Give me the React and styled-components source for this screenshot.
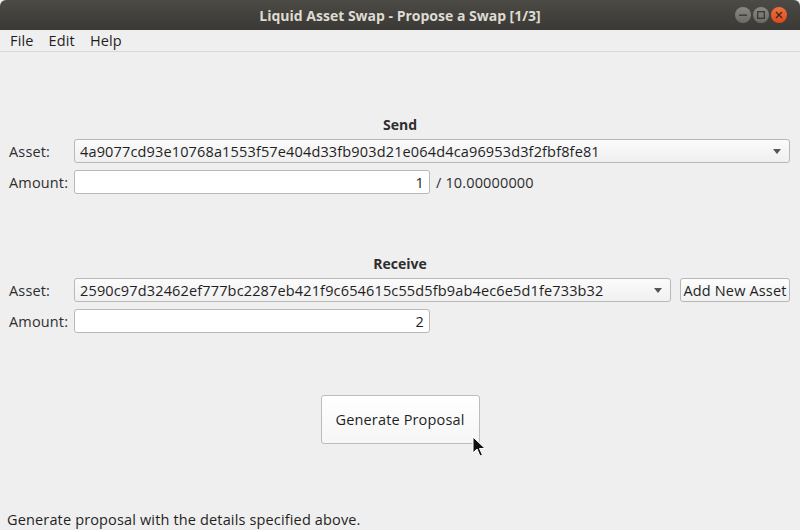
import React from "react";
import styled, { createGlobalStyle } from "styled-components";

const GlobalStyle = createGlobalStyle`
  html, body {
    margin: 0;
    padding: 0;
    background: #efefef;
  }
  * { box-sizing: border-box; }
`;

const Window = styled.div`
  position: relative;
  width: 800px;
  height: 530px;
  display: flex;
  flex-direction: column;
  background: #efefef;
  font-family: "Open Sans", "DejaVu Sans", sans-serif;
  font-size: 14.5px;
  letter-spacing: 0.15px;
  color: #2e2e2e;
  overflow: hidden;
`;

const TitleBar = styled.div`
  position: relative;
  height: 30px;
  flex: none;
  display: flex;
  align-items: center;
  justify-content: center;
  background: linear-gradient(#4b4a45, #3a3935);
  color: #dfdbd2;
  font-weight: bold;
  font-size: 14px;
  letter-spacing: 0;
  border-radius: 6px 6px 0 0;
`;

const Controls = styled.div`
  position: absolute;
  right: 13px;
  top: 7px;
  display: flex;
  gap: 2px;
`;

const CircleBtn = styled.div`
  width: 16px;
  height: 16px;
  border-radius: 50%;
  background: ${(p) => (p.close ? "linear-gradient(#f0703f, #df4a1b)" : "linear-gradient(#8a8883, #6c6a65)")};
  display: flex;
  align-items: center;
  justify-content: center;
`;

const MenuBar = styled.div`
  height: 22px;
  flex: none;
  display: flex;
  align-items: center;
  gap: 15px;
  padding-left: 10px;
  border-bottom: 1px solid #d8d8d8;
  color: #1f1f1f;
`;

const Content = styled.div`
  flex: 1;
  display: flex;
  flex-direction: column;
  padding: 0 10px 0 9px;
`;

const Heading = styled.div`
  text-align: center;
  font-weight: bold;
  font-size: 14px;
  letter-spacing: 0;
  line-height: 16px;
  margin-top: ${(p) => p.top}px;
  margin-bottom: 6px;
  padding-left: 1px;
`;

const Row = styled.div`
  display: flex;
  align-items: center;
  height: 24px;
  margin-bottom: 7px;
`;

const Label = styled.div`
  width: 65px;
  flex: none;
`;

const Combo = styled.div`
  flex: 1;
  height: 24px;
  display: flex;
  align-items: center;
  justify-content: space-between;
  padding: 0 8px 0 5px;
  border: 1px solid #b8b8b8;
  border-radius: 3px;
  background: linear-gradient(#fbfbfb, #f0f0f0);
  color: #1f1f1f;
`;

const Arrow = styled.div`
  width: 0;
  height: 0;
  border-left: 4px solid transparent;
  border-right: 4px solid transparent;
  border-top: 5px solid #555;
`;

const Input = styled.div`
  width: 356px;
  height: 24px;
  flex: none;
  display: flex;
  align-items: center;
  justify-content: flex-end;
  padding: 0 5px;
  border: 1px solid #b8b8b8;
  border-radius: 3px;
  background: #fff;
  color: #1f1f1f;
`;

const Suffix = styled.div`
  margin-left: 6px;
`;

const SmallButton = styled.div`
  height: 24px;
  width: 110px;
  margin-left: 9px;
  display: flex;
  align-items: center;
  justify-content: center;
  border: 1px solid #b8b8b8;
  border-radius: 3px;
  background: linear-gradient(#fdfdfd, #f1f1f1);
  color: #1f1f1f;
  white-space: nowrap;
`;

const BigButton = styled.div`
  align-self: center;
  margin-top: 55px;
  margin-left: 1px;
  width: 159px;
  height: 49px;
  display: flex;
  align-items: center;
  justify-content: center;
  border: 1px solid #bdbdbd;
  border-radius: 3px;
  background: linear-gradient(#ffffff, #f6f6f6);
  color: #1f1f1f;
`;

const StatusBar = styled.div`
  margin-top: auto;
  margin-left: -2px;
  height: 22px;
  flex: none;
  display: flex;
  align-items: center;
  color: #1f1f1f;
`;

const Cursor = styled.svg`
  position: absolute;
  left: 472px;
  top: 436px;
`;

export default function App() {
  return (
    <Window>
      <GlobalStyle />
      <TitleBar>
        Liquid Asset Swap - Propose a Swap [1/3]
        <Controls>
          <CircleBtn>
            <svg width="8" height="8" viewBox="0 0 8 8">
              <rect x="0" y="3.5" width="8" height="1.4" fill="#3a3935" />
            </svg>
          </CircleBtn>
          <CircleBtn>
            <svg width="8" height="8" viewBox="0 0 8 8">
              <rect x="0.7" y="0.7" width="6.6" height="6.6" fill="none" stroke="#3a3935" strokeWidth="1.3" />
            </svg>
          </CircleBtn>
          <CircleBtn close>
            <svg width="8" height="8" viewBox="0 0 8 8">
              <path d="M1 1 L7 7 M7 1 L1 7" stroke="#3a2a22" strokeWidth="1.4" />
            </svg>
          </CircleBtn>
        </Controls>
      </TitleBar>
      <MenuBar>
        <span>File</span>
        <span>Edit</span>
        <span>Help</span>
      </MenuBar>
      <Content>
        <Heading top={65}>Send</Heading>
        <Row>
          <Label>Asset:</Label>
          <Combo>
            <span>4a9077cd93e10768a1553f57e404d33fb903d21e064d4ca96953d3f2fbf8fe81</span>
            <Arrow />
          </Combo>
        </Row>
        <Row>
          <Label>Amount:</Label>
          <Input>1</Input>
          <Suffix>/ 10.00000000</Suffix>
        </Row>
        <Heading top={55}>Receive</Heading>
        <Row>
          <Label>Asset:</Label>
          <Combo>
            <span>2590c97d32462ef777bc2287eb421f9c654615c55d5fb9ab4ec6e5d1fe733b32</span>
            <Arrow />
          </Combo>
          <SmallButton>Add New Asset</SmallButton>
        </Row>
        <Row>
          <Label>Amount:</Label>
          <Input>2</Input>
        </Row>
        <BigButton>Generate Proposal</BigButton>
        <StatusBar>Generate proposal with the details specified above.</StatusBar>
      </Content>
      <Cursor width="14" height="22" viewBox="0 0 14 22">
        <path d="M1 1 L1 17 L5 13 L8 20 L10.5 19 L7.5 12.5 L13 12.5 Z" fill="#111" stroke="#fff" strokeWidth="1" />
      </Cursor>
    </Window>
  );
}
